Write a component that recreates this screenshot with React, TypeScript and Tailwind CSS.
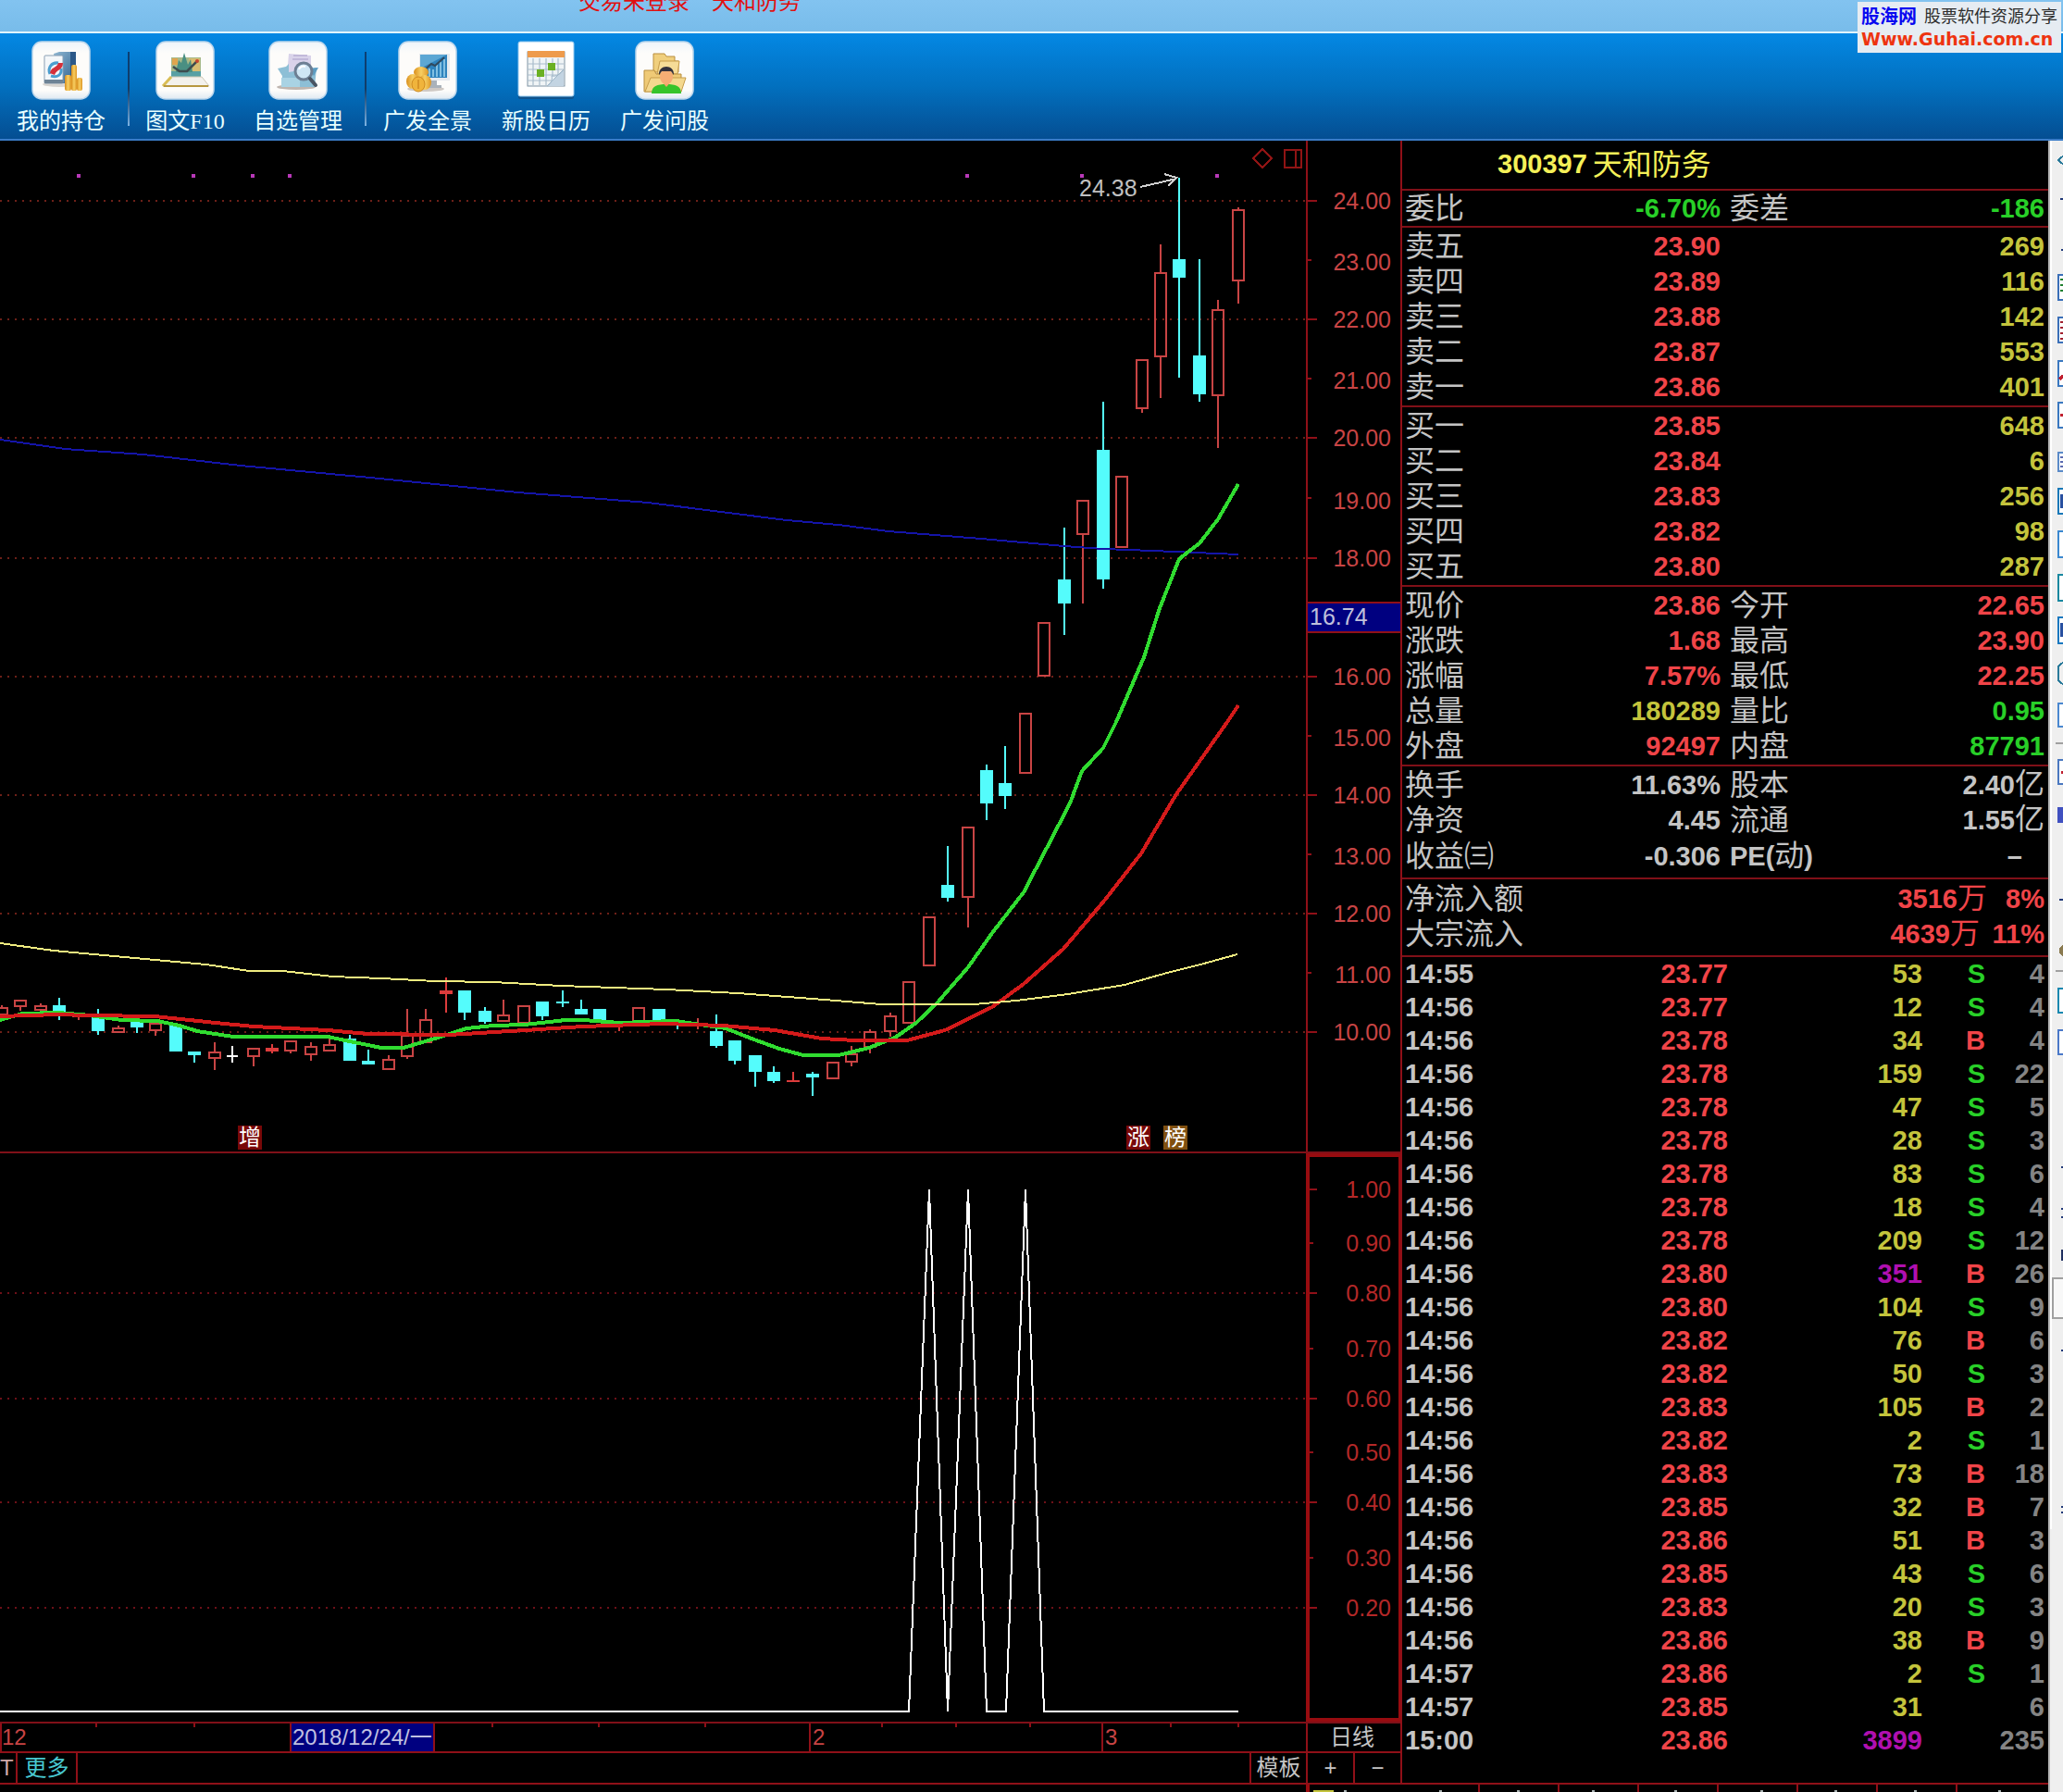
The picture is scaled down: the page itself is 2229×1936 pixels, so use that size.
import type { ReactNode } from "react";

const SANS = "font-['Liberation_Sans','Noto_Sans_CJK_SC',sans-serif]";
const SONG = "font-['Liberation_Serif','Noto_Sans_CJK_SC',serif]";

/* ---------- toolbar ---------- */

function Tile({ children }: { children: ReactNode }) {
  return (
    <svg viewBox="0 0 64 64" className="block h-16 w-16" aria-hidden="true">
      <defs>
        <linearGradient id="tile" x1="0" y1="0" x2="0" y2="1">
          <stop offset="0" stopColor="#eef4fa" />
          <stop offset="0.2" stopColor="#fdfcfa" />
          <stop offset="0.85" stopColor="#fdfcfa" />
          <stop offset="1" stopColor="#dfe9f2" />
        </linearGradient>
        <linearGradient id="gold" x1="0" y1="0" x2="1" y2="0">
          <stop offset="0" stopColor="#d98e1c" />
          <stop offset="0.5" stopColor="#f8cf62" />
          <stop offset="1" stopColor="#dd9524" />
        </linearGradient>
        <linearGradient id="steel" x1="0" y1="0" x2="1" y2="1">
          <stop offset="0" stopColor="#8fb7d2" />
          <stop offset="1" stopColor="#2c5f8e" />
        </linearGradient>
      </defs>
      {children}
    </svg>
  );
}

const RoundTile = () => (
  <rect x="1" y="1" width="62" height="62" rx="10" fill="url(#tile)" stroke="#bcd6ec" strokeWidth="1.5" />
);

function HoldingsIcon() {
  return (
    <Tile>
      <RoundTile />
      <ellipse cx="30" cy="47" rx="18" ry="3" fill="#d9d5d0" />
      <path d="M24 14 L30 12 H48 V42 L40 46 H30 Z" fill="url(#steel)" />
      <path d="M42 12 H48 V42 L42 45 Z" fill="#2c5888" />
      <rect x="14" y="16" width="20" height="30" rx="1" fill="#f4f7fa" stroke="#8aa0b4" />
      <path d="M14 42 H34 V46 H14 Z" fill="#6f8496" />
      <path d="M20 36 C17 29 22 23 29 24" fill="none" stroke="#4b9fd0" strokeWidth="3" />
      <path d="M32 30 C33 37 28 40 21 38" fill="none" stroke="#4b9fd0" strokeWidth="3" />
      <path d="M20 35 C21 28 27 30 29 24 L34 24 C34 32 27 31 25 37 Z" fill="#d6303a" />
      <rect x="36" y="37" width="7" height="17" rx="2" fill="url(#gold)" />
      <rect x="43" y="26" width="6" height="28" rx="2" fill="url(#gold)" />
      <rect x="49" y="40" width="6" height="14" rx="2" fill="url(#gold)" />
    </Tile>
  );
}

function LaptopChartIcon() {
  return (
    <Tile>
      <RoundTile />
      <path d="M17 18 H49 V40 H17 Z" fill="#a7b98a" />
      <path d="M18 19 H24 V26 H18 Z" fill="#e0a54e" />
      <path d="M36 19 H48 V38 H38 Z" fill="#d8bd72" />
      <path d="M17 33 H49 V39 H17 Z" fill="#58a0a4" />
      <path d="M22 34 L25 21 L28 24 L31 13 L35 26 L38 20 L40 34 Z" fill="#4a8f82" />
      <path d="M19 28 L26 33 L34 33 L45 22" fill="none" stroke="#3d4d50" strokeWidth="2.5" />
      <circle cx="45" cy="22" r="2" fill="#c7442f" />
      <path d="M16 39 H50 L58 49 H8 Z" fill="#f3f1ec" stroke="#cfc8b4" />
      <path d="M17 39 L8 49" stroke="#d9bd55" strokeWidth="3" />
      <path d="M9 49 H57" stroke="#b7973f" strokeWidth="2" />
    </Tile>
  );
}

function SearchFolderIcon() {
  return (
    <Tile>
      <RoundTile />
      <ellipse cx="30" cy="50" rx="21" ry="3" fill="#bfb6b0" />
      <path d="M22 14 L46 16 V38 H20 Z" fill="#d9d3ea" />
      <path d="M27 16 H42 M26 20 H43" stroke="#b9b0d4" strokeWidth="1.5" />
      <path d="M10 30 L19 28 L22 25 V34 L52 29 L50 50 H14 L15 38 Z" fill="#8dbfd6" />
      <path d="M14 40 H34 V50 H14 Z" fill="#a9d3e4" />
      <path d="M44 30 L54 29 L49 38 Z" fill="#5d9dc2" />
      <circle cx="38" cy="33" r="9" fill="#cfe6f4" stroke="#6d7f93" strokeWidth="3" />
      <path d="M33 31 C34 28 37 27 40 28" fill="none" stroke="#fff" strokeWidth="2" />
      <path d="M45 41 L51 48" stroke="#4a5563" strokeWidth="4" strokeLinecap="round" />
    </Tile>
  );
}

function MonitorCoinsIcon() {
  return (
    <Tile>
      <RoundTile />
      <ellipse cx="30" cy="52" rx="20" ry="3" fill="#cfc9c4" />
      <rect x="23" y="14" width="33" height="29" fill="#e6eaee" />
      <rect x="24" y="15" width="29" height="25" fill="#2e83bd" />
      <path d="M24 15 H53 L24 30 Z" fill="#5ca7d4" />
      <path d="M30 39 V32 M34 39 V30 M38 39 V31 M42 39 V26 M46 39 V23 M50 39 V20" stroke="#9fd5ee" strokeWidth="1.5" />
      <path d="M27 33 L36 25 L40 27 L50 18" fill="none" stroke="#30495e" strokeWidth="2" />
      <path d="M34 43 H42 V48 H47 V51 H32 Z" fill="#aab2ba" />
      <ellipse cx="25" cy="34" rx="8" ry="6" fill="url(#gold)" />
      <ellipse cx="16" cy="44" rx="7" ry="8" fill="url(#gold)" />
      <ellipse cx="29" cy="45" rx="7" ry="8" fill="url(#gold)" />
      <ellipse cx="22" cy="47" rx="7" ry="8" fill="#f0b43c" stroke="#d08b20" />
      <path d="M22 42 V52" stroke="#d08b20" strokeWidth="1.5" />
    </Tile>
  );
}

function CalendarIcon() {
  return (
    <Tile>
      <rect x="2" y="4" width="60" height="59" rx="2" fill="#164a7a" opacity="0.7" />
      <rect x="2" y="1" width="60" height="59" rx="2" fill="#fff" stroke="#8fc6ee" />
      <rect x="12" y="12" width="40" height="37" fill="#f0f4f6" stroke="#7f93a3" />
      <rect x="12" y="11" width="40" height="7" fill="#ee9b4c" />
      <path d="M12 25 H51 M12 31 H51 M12 37 H51 M12 43 H51 M18 19 V48 M25 19 V48 M32 19 V48 M39 19 V48 M45 19 V48" stroke="#a9bccb" strokeWidth="1.2" />
      <rect x="34" y="24" width="8" height="8" fill="#6ab023" />
      <rect x="22" y="31" width="8" height="8" fill="#6ab023" />
      <path d="M33 49 L51 31 V49 Z" fill="#c3d4e2" />
      <path d="M33 49 C38 46 39 42 38 38 C43 39 48 36 51 31 Z" fill="#e9f1f7" stroke="#9fb6c8" />
    </Tile>
  );
}

function AskIcon() {
  return (
    <Tile>
      <RoundTile />
      <path d="M20 14 H32 L34 17 H43 V22 H47 V34 H20 Z" fill="#f0cf7d" stroke="#b98f3e" />
      <path d="M24 36 L27 22 H48 L46 36 Z" fill="#f6dc97" stroke="#c79d4b" />
      <path d="M10 32 H21 L23 36 H50 V55 H10 Z" fill="#efca76" stroke="#b98f3e" />
      <path d="M11 55 L17 40 H55 L50 55 Z" fill="#f4d88e" stroke="#c79d4b" />
      <path d="M18 57 C18 49 24 47 34 47 C44 47 50 49 50 57 Z" fill="#36c42a" />
      <path d="M29 44 H39 L34 50 Z" fill="#f2a56a" />
      <ellipse cx="34" cy="39" rx="7" ry="8" fill="#f5ad74" />
      <path d="M26 37 C25 25 43 25 42 37 L39 33 H29 Z" fill="#33313b" />
    </Tile>
  );
}

function ToolButton({ label, icon }: { label: string; icon: ReactNode }) {
  return (
    <button className={`flex w-24 flex-col items-center gap-2 whitespace-nowrap text-[24px] leading-[30px] text-[#e8ffff] ${SONG}`}>
      {icon}
      {label}
    </button>
  );
}

const Separator = () => <div className="mt-3 h-20 w-0.5 bg-linear-to-b from-[#0b3f74] via-[#123c66] to-[#7fb4e4]" />;

function Header() {
  return (
    <header className="relative">
      <div className="h-[34px] bg-linear-to-b from-[#82c3f0] to-[#78bcea]">
        <div className={`flex h-4 items-end gap-6 overflow-hidden pl-[625px] text-[24px] leading-7 text-[#e01010] ${SANS}`}>
          <span>交易未登录</span>
          <span>天和防务</span>
        </div>
      </div>
      <nav className="flex h-[118px] items-start border-t-2 border-b-2 border-t-[#dff4fc] border-b-[#3a7cc8] bg-linear-to-b from-[#0488e4] via-[#0270bf] to-[#044e92] pt-2 pl-[18px]">
        <ToolButton label="我的持仓" icon={<HoldingsIcon />} />
        <div className="w-6" />
        <Separator />
        <div className="flex gap-[26px] pl-3">
          <ToolButton label="图文F10" icon={<LaptopChartIcon />} />
          <ToolButton label="自选管理" icon={<SearchFolderIcon />} />
        </div>
        <div className="w-6" />
        <Separator />
        <div className="flex gap-8 pl-[18px]">
          <ToolButton label="广发全景" icon={<MonitorCoinsIcon />} />
          <ToolButton label="新股日历" icon={<CalendarIcon />} />
          <ToolButton label="广发问股" icon={<AskIcon />} />
        </div>
      </nav>
      <a href="#guhai" className={`absolute top-0.5 right-0.5 block h-[55px] w-[220px] bg-[#e6ecf2] px-1 pt-1 whitespace-nowrap ${SANS}`}>
        <span className="flex h-6 items-center justify-between">
          <b className="text-[20px] leading-6 text-[#0808f0]">股海网</b>
          <span className="text-[18px] leading-6 text-[#2c2c2c]">股票软件资源分享</span>
        </span>
        <b className="block font-['DejaVu_Sans',sans-serif] text-[19px] leading-6 text-[#ee3410]">Www.Guhai.com.cn</b>
      </a>
    </header>
  );
}

/* ---------- candle chart ---------- */

type Kind = "up" | "down" | "solid" | "cross";
type Candle = [x: number, high: number, low: number, top: number, bottom: number, kind: Kind];

const candles: Candle[] = [
  [2, 1086, 1097, 1088, 1097, "up"],
  [22, 1080, 1092, 1080, 1088, "up"],
  [44, 1084, 1092, 1086, 1092, "up"],
  [64, 1078, 1102, 1086, 1094, "down"],
  [85, 1096, 1102, 1096, 1099, "up"],
  [106, 1090, 1118, 1097, 1114, "down"],
  [128, 1108, 1116, 1110, 1116, "up"],
  [148, 1103, 1116, 1103, 1110, "down"],
  [168, 1105, 1119, 1105, 1114, "up"],
  [190, 1108, 1136, 1108, 1136, "down"],
  [210, 1136, 1148, 1136, 1140, "down"],
  [232, 1126, 1156, 1136, 1144, "up"],
  [251, 1130, 1148, 1140, 1142, "cross"],
  [274, 1132, 1152, 1132, 1142, "up"],
  [294, 1128, 1138, 1132, 1136, "solid"],
  [314, 1124, 1138, 1124, 1136, "up"],
  [336, 1126, 1146, 1130, 1140, "up"],
  [356, 1120, 1136, 1128, 1136, "up"],
  [378, 1118, 1146, 1122, 1146, "down"],
  [398, 1134, 1150, 1146, 1150, "down"],
  [420, 1140, 1156, 1144, 1156, "up"],
  [440, 1090, 1144, 1118, 1142, "up"],
  [460, 1090, 1127, 1101, 1127, "up"],
  [482, 1056, 1094, 1070, 1074, "solid"],
  [502, 1070, 1102, 1070, 1094, "down"],
  [524, 1088, 1106, 1092, 1104, "down"],
  [544, 1080, 1104, 1096, 1104, "up"],
  [566, 1086, 1106, 1086, 1106, "up"],
  [586, 1082, 1102, 1082, 1098, "down"],
  [608, 1070, 1088, 1082, 1084, "down"],
  [628, 1080, 1096, 1090, 1096, "down"],
  [648, 1090, 1104, 1090, 1104, "down"],
  [669, 1104, 1114, 1104, 1106, "solid"],
  [690, 1088, 1104, 1088, 1104, "up"],
  [712, 1090, 1103, 1090, 1103, "down"],
  [732, 1104, 1112, 1104, 1106, "down"],
  [754, 1100, 1112, 1106, 1109, "up"],
  [774, 1096, 1132, 1114, 1130, "down"],
  [794, 1124, 1150, 1124, 1146, "down"],
  [816, 1140, 1174, 1140, 1158, "down"],
  [836, 1152, 1170, 1158, 1168, "down"],
  [857, 1158, 1169, 1167, 1169, "solid"],
  [878, 1158, 1184, 1160, 1164, "down"],
  [900, 1147, 1166, 1147, 1166, "up"],
  [920, 1130, 1152, 1138, 1148, "up"],
  [940, 1112, 1138, 1114, 1132, "up"],
  [962, 1094, 1120, 1097, 1115, "up"],
  [982, 1060, 1106, 1060, 1106, "up"],
  [1004, 990, 1044, 990, 1044, "up"],
  [1024, 914, 974, 956, 970, "down"],
  [1046, 893, 1002, 893, 970, "up"],
  [1066, 826, 886, 832, 868, "down"],
  [1086, 806, 874, 846, 860, "down"],
  [1108, 770, 836, 770, 836, "up"],
  [1128, 672, 731, 672, 731, "up"],
  [1150, 570, 686, 626, 652, "down"],
  [1170, 540, 652, 540, 578, "up"],
  [1192, 434, 636, 486, 626, "down"],
  [1212, 514, 592, 514, 592, "up"],
  [1234, 388, 446, 388, 442, "up"],
  [1254, 264, 430, 294, 386, "up"],
  [1274, 192, 408, 280, 300, "down"],
  [1296, 280, 434, 384, 426, "down"],
  [1316, 324, 484, 334, 428, "up"],
  [1338, 224, 328, 226, 304, "up"],
];

const candleColor: Record<Kind, string> = { up: "#c84444", down: "#54fcfc", solid: "#dc3c3c", cross: "#ffffff" };

function CandleShape({ c }: { c: Candle }) {
  const [x, high, low, top, bottom, kind] = c;
  const color = candleColor[kind];
  if (kind === "up") {
    return (
      <g fill={color}>
        {top > high && <rect x={x - 1} y={high} width="2" height={top - high} />}
        {low > bottom && <rect x={x - 1} y={bottom} width="2" height={low - bottom} />}
        <rect x={x - 6} y={top + 1} width="12" height={bottom - top - 2} fill="none" stroke={color} strokeWidth="2" />
      </g>
    );
  }
  const half = kind === "cross" ? 6 : 7;
  return (
    <g fill={color}>
      <rect x={x - 1} y={high} width="2" height={low - high} />
      <rect x={x - half} y={top} width={half * 2} height={bottom - top} />
    </g>
  );
}

const ma = {
  blue: "0,475 70,485 155,491 260,503 400,516 560,532 700,543 850,562 906,567 960,574 1060,582 1150,590 1192,593 1245,595 1338,599",
  yellow:
    "0,1019 58,1027 167,1037 223,1042 269,1049 305,1049 359,1055 412,1057 470,1060 533,1061 606,1065 720,1069 797,1073 878,1079 952,1085 1052,1085 1098,1081 1154,1074 1215,1064 1261,1051 1297,1042 1337,1031",
  green:
    "0,1102 24,1095 63,1094 97,1097 131,1102 170,1103 194,1108 213,1114 252,1120 354,1120 373,1124 412,1132 436,1132 473,1121 504,1111 533,1108 567,1107 611,1102 630,1102 669,1105 730,1103 784,1111 812,1122 842,1133 868,1140 906,1140 939,1132 967,1121 990,1105 1013,1083 1046,1045 1072,1008 1106,964 1156,868 1169,833 1192,808 1206,780 1236,710 1253,657 1274,604 1284,596 1296,587 1316,561 1338,523",
  red: "0,1098 63,1096 97,1097 167,1098 233,1105 274,1109 354,1113 397,1117 485,1118 567,1113 630,1109 717,1106 781,1108 837,1113 888,1122 924,1124 980,1124 1021,1113 1072,1088 1106,1063 1149,1025 1194,972 1233,922 1271,858 1326,780 1338,762",
};

const priceGrid = [217, 345, 473, 603, 731, 859, 987, 1115];
const dots = [85, 209, 273, 313, 1045, 1169, 1315];

function PriceChart() {
  return (
    <div className="relative min-w-0 flex-1">
      <svg className="block h-[1092px] w-full" shapeRendering="crispEdges" role="img" aria-label="日线">
        <g transform="translate(0 -152)">
          {priceGrid.map((y) => (
            <line key={y} x1="0" x2="100%" y1={y} y2={y} stroke="#6e2018" strokeWidth="2" strokeDasharray="2 6" />
          ))}
          {dots.map((x) => (
            <rect key={x} x={x - 2} y="188" width="4" height="4" fill="#b838b8" />
          ))}
          {candles.map((c) => (
            <CandleShape key={c[0]} c={c} />
          ))}
          <polyline points={ma.blue} fill="none" stroke="#1414a8" strokeWidth="2" />
          <polyline points={ma.green} fill="none" stroke="#30dc30" strokeWidth="4" />
          <polyline points={ma.red} fill="none" stroke="#d41a1a" strokeWidth="4" />
          <polyline points={ma.yellow} fill="none" stroke="#f0ec80" strokeWidth="2" />
          <path d="M1232 202 L1254 197 L1271 193 M1258 188 L1271 192 L1262 201" fill="none" stroke="#d0d0d0" strokeWidth="2" />
          <text x="1166" y="212" fontSize="25" fill="#c0c0c0" fontFamily="Liberation Sans">
            24.38
          </text>
          <path d="M1364 161 L1374 171 L1364 181 L1354 171 Z M1388 162 H1406 V181 H1388 Z M1400 162 V181" fill="none" stroke="#901414" strokeWidth="2" />
        </g>
      </svg>
      <span className={`absolute bottom-0.5 left-[257px] h-[26px] w-[26px] bg-[#780808] text-center text-[24px] leading-[26px] text-white ${SANS}`}>增</span>
      <span className={`absolute bottom-0.5 left-[1217px] h-[26px] w-[26px] bg-[#780808] text-center text-[24px] leading-[26px] text-white ${SANS}`}>涨</span>
      <span className={`absolute bottom-0.5 left-[1257px] h-[26px] w-[26px] bg-[#805010] text-center text-[24px] leading-[26px] text-white ${SANS}`}>榜</span>
    </div>
  );
}

const priceTicks: [string, number, number][] = [
  ["24.00", 217, 217],
  ["23.00", 281, 283],
  ["22.00", 345, 345],
  ["21.00", 409, 411],
  ["20.00", 473, 473],
  ["19.00", 538, 541],
  ["18.00", 603, 603],
  ["16.00", 731, 731],
  ["15.00", 795, 797],
  ["14.00", 859, 859],
  ["13.00", 923, 925],
  ["12.00", 987, 987],
  ["11.00", 1051, 1053],
  ["10.00", 1115, 1115],
];

function PriceAxis() {
  return (
    <div className="relative w-[102px] shrink-0 border-l-2 border-[#901018]">
      <svg className="block h-[1092px] w-full" shapeRendering="crispEdges">
        <g transform="translate(0 -152)">
          {priceTicks.map(([label, tick, mid]) => (
            <g key={label}>
              <rect x="0" y={tick - 1} width={tick === mid ? 10 : 4} height="2" fill="#901018" />
              <text x="90" y={mid + 9} textAnchor="end" fontSize="25" fill="#c84444" fontFamily="Liberation Sans">
                {label}
              </text>
            </g>
          ))}
        </g>
      </svg>
      <div className={`absolute top-[498px] right-0 left-0 h-[34px] border-y-2 border-[#901018] bg-[#000080] pl-0.5 text-[25px] leading-7 text-[#c0c0dc] ${SANS}`}>
        16.74
      </div>
    </div>
  );
}

/* ---------- indicator chart ---------- */

const levels: [string, number][] = [
  ["1.00", 1285],
  ["0.90", 1343],
  ["0.80", 1397],
  ["0.70", 1457],
  ["0.60", 1511],
  ["0.50", 1569],
  ["0.40", 1623],
  ["0.30", 1683],
  ["0.20", 1737],
];

function SignalChart() {
  return (
    <svg className="block h-[614px] min-w-0 flex-1" shapeRendering="crispEdges" role="img" aria-label="指标">
      <g transform="translate(0 -1246)">
        {[1397, 1511, 1623, 1737].map((y) => (
          <line key={y} x1="0" x2="100%" y1={y} y2={y} stroke="#6e1018" strokeWidth="2" strokeDasharray="2 6" />
        ))}
        <polyline
          points="0,1849 982,1849 1004,1285 1024,1849 1046,1285 1066,1849 1087,1849 1108,1285 1128,1849 1338,1849"
          fill="none"
          stroke="#ffffff"
          strokeWidth="2"
          strokeLinejoin="bevel"
        />
      </g>
    </svg>
  );
}

function SignalAxis() {
  return (
    <div className="w-[102px] shrink-0 border-4 border-r-2 border-[#980c10]">
      <svg className="block h-[606px] w-full" shapeRendering="crispEdges">
        <g transform="translate(0 -1250)">
          {levels.map(([label, y], i) => (
            <g key={label}>
              <rect x="0" y={y - 1} width={i % 2 ? 4 : 8} height="2" fill="#901018" />
              <text x="88" y={y + 9} textAnchor="end" fontSize="25" fill="#b42828" fontFamily="Liberation Sans">
                {label}
              </text>
            </g>
          ))}
        </g>
      </svg>
    </div>
  );
}

/* ---------- date row and tab row ---------- */

function DateRow() {
  return (
    <div className={`flex h-8 border-t-2 border-[#801018] text-[24px] leading-[30px] text-[#c84444] ${SANS}`}>
      <div className="relative flex min-w-0 flex-1">
        <svg className="absolute inset-0 h-full w-full" shapeRendering="crispEdges" aria-hidden="true">
          {[104, 210, 532, 647, 762, 953, 1033, 1113, 1265, 1338].map((x) => (
            <rect key={x} x={x - 1} y="0" width="2" height="4" fill="#901018" />
          ))}
        </svg>
        <span className="w-[313px] border-l-2 border-[#901018]">12</span>
        <span className="w-[157px] border-x-2 border-[#901018] bg-[#000080] pl-px whitespace-nowrap text-[#c0c0e0]">
          2018/12/24/一
        </span>
        <span className="w-[404px]" />
        <span className="w-[316px] border-l-2 border-[#901018] pl-0.5">2</span>
        <span className="border-l-2 border-[#901018] pl-0.5">3</span>
      </div>
      <button className="w-[102px] shrink-0 border-l-2 border-[#901018] pr-1 text-center text-[#c4c4c4]">日线</button>
    </div>
  );
}

function TabRow() {
  return (
    <div className={`flex h-[34px] border-t-2 border-[#901018] text-[24px] leading-8 text-[#c4c4c4] ${SANS}`}>
      <button className="w-[17px] text-left text-[#d0a8a8]">T</button>
      <button className="w-[67px] border-x-2 border-[#901018] text-[#48c8d0]">更多</button>
      <div className="flex-1" />
      <button className="w-[61px] border-l-2 border-[#901018]">模板</button>
      <button className="w-[51px] border-l-2 border-[#901018]">+</button>
      <button className="w-[51px] border-l-2 border-[#901018]">−</button>
    </div>
  );
}

/* ---------- quote panel ---------- */

const R = "text-[#f04448]";
const G = "text-[#28d028]";
const Y = "text-[#c4c43c]";
const W = "text-[#c4c4c4]";

type QuoteRow = [label: string, value: string, valueColor: string, label2: string, value2: string, value2Color: string];

const sells: QuoteRow[] = [
  ["卖五", "23.90", R, "", "269", Y],
  ["卖四", "23.89", R, "", "116", Y],
  ["卖三", "23.88", R, "", "142", Y],
  ["卖二", "23.87", R, "", "553", Y],
  ["卖一", "23.86", R, "", "401", Y],
];
const buys: QuoteRow[] = [
  ["买一", "23.85", R, "", "648", Y],
  ["买二", "23.84", R, "", "6", Y],
  ["买三", "23.83", R, "", "256", Y],
  ["买四", "23.82", R, "", "98", Y],
  ["买五", "23.80", R, "", "287", Y],
];
const prices: QuoteRow[] = [
  ["现价", "23.86", R, "今开", "22.65", R],
  ["涨跌", "1.68", R, "最高", "23.90", R],
  ["涨幅", "7.57%", R, "最低", "22.25", R],
  ["总量", "180289", Y, "量比", "0.95", G],
  ["外盘", "92497", R, "内盘", "87791", G],
];
const basics: QuoteRow[] = [
  ["换手", "11.63%", W, "股本", "2.40亿", W],
  ["净资", "4.45", W, "流通", "1.55亿", W],
  ["收益㈢", "-0.306", W, "PE(动)", "–", W],
];

/* Chinese units keep the plain weight of the labels while digits are bold. */
function Value({ text }: { text: string }) {
  const unit = /[亿万]$/.test(text) ? text.slice(-1) : "";
  return (
    <>
      {unit ? text.slice(0, -1) : text}
      {unit && <span className="text-[32px] leading-none font-normal">{unit}</span>}
    </>
  );
}

function QuoteTable({ rows, pad }: { rows: QuoteRow[]; pad: string }) {
  return (
    <div className={`border-t-2 border-[#801018] ${pad}`}>
      <table className="w-full table-fixed border-collapse">
        <colgroup>
          <col className="w-[112px]" />
          <col className="w-[234px]" />
          <col className="w-[120px]" />
          <col />
        </colgroup>
        <tbody>
          {rows.map(([a, av, ac, b, bv, bc]) => (
            <tr key={a} className="h-[38px] leading-[38px] whitespace-nowrap">
              <th scope="row" className="p-0 pl-[3px] text-left text-[32px] font-normal">
                {a}
              </th>
              <td className={`p-0 pr-0.5 text-right text-[29px] font-bold ${ac}`}>{av}</td>
              <td className="p-0 pl-2 text-left text-[32px] font-normal">
                {b.startsWith("PE") ? (
                  <>
                    <span className="text-[29px] font-bold">PE(</span>动<span className="text-[29px] font-bold">)</span>
                  </>
                ) : (
                  b
                )}
              </td>
              <td className={`p-0 text-right text-[29px] font-bold ${bv === "–" ? "pr-7" : "pr-1"} ${bc}`}>
                <Value text={bv} />
              </td>
            </tr>
          ))}
        </tbody>
      </table>
    </div>
  );
}

const flows: [string, string, string, string][] = [
  ["净流入额", "3516万", "8%", "w-[62px]"],
  ["大宗流入", "4639万", "11%", "w-[70px]"],
];

function FlowRows() {
  return (
    <div className="border-t-2 border-[#801018] pt-0.5 pb-1">
      {flows.map(([label, value, pct, width]) => (
        <div key={label} className="flex h-[38px] pr-1 pl-[3px] leading-[38px] whitespace-nowrap">
          <span className="flex-1 text-[32px]">{label}</span>
          <span className={`text-[29px] font-bold ${R}`}>
            <Value text={value} />
          </span>
          <span className={`text-right text-[29px] font-bold ${width} ${R}`}>{pct}</span>
        </div>
      ))}
    </div>
  );
}

type Tick = [time: string, price: string, volume: string, side: string, count: string];

const ticks: Tick[] = [
  ["14:55", "23.77", "53", "S", "4"],
  ["14:56", "23.77", "12", "S", "4"],
  ["14:56", "23.78", "34", "B", "4"],
  ["14:56", "23.78", "159", "S", "22"],
  ["14:56", "23.78", "47", "S", "5"],
  ["14:56", "23.78", "28", "S", "3"],
  ["14:56", "23.78", "83", "S", "6"],
  ["14:56", "23.78", "18", "S", "4"],
  ["14:56", "23.78", "209", "S", "12"],
  ["14:56", "23.80", "351", "B", "26"],
  ["14:56", "23.80", "104", "S", "9"],
  ["14:56", "23.82", "76", "B", "6"],
  ["14:56", "23.82", "50", "S", "3"],
  ["14:56", "23.83", "105", "B", "2"],
  ["14:56", "23.82", "2", "S", "1"],
  ["14:56", "23.83", "73", "B", "18"],
  ["14:56", "23.85", "32", "B", "7"],
  ["14:56", "23.86", "51", "B", "3"],
  ["14:56", "23.85", "43", "S", "6"],
  ["14:56", "23.83", "20", "S", "3"],
  ["14:56", "23.86", "38", "B", "9"],
  ["14:57", "23.86", "2", "S", "1"],
  ["14:57", "23.85", "31", "", "6"],
  ["15:00", "23.86", "3899", "", "235"],
];

function TickTable() {
  return (
    <div className="border-t-2 border-[#801018]">
      <table className="w-full table-fixed border-collapse text-[29px] font-bold">
        <colgroup>
          <col className="w-[120px]" />
          <col className="w-[232px]" />
          <col className="w-[210px]" />
          <col className="w-[68px]" />
          <col />
        </colgroup>
        <tbody>
          {ticks.map(([time, price, volume, side, count], i) => (
            <tr key={i} className="h-9 leading-9">
              <td className="p-0 pl-[3px]">{time}</td>
              <td className={`p-0 text-right ${R}`}>{price}</td>
              <td className={`p-0 text-right ${Number(volume) > 300 ? "text-[#b010b0]" : Y}`}>{volume}</td>
              <td className={`p-0 text-right ${side === "S" ? G : R}`}>{side}</td>
              <td className="p-0 pr-1 text-right text-[#848484]">{count}</td>
            </tr>
          ))}
        </tbody>
      </table>
    </div>
  );
}

function QuotePanel() {
  return (
    <section className={`w-[700px] shrink-0 border-l-2 border-[#901018] text-[#c4c4c4] ${SANS}`}>
      <h1 className="flex h-[52px] items-center gap-1.5 pl-[103px] text-[#f4f058]">
        <span className="text-[29px] font-bold">300397</span>
        <span className="text-[32px]">天和防务</span>
      </h1>
      <QuoteTable rows={[["委比", "-6.70%", G, "委差", "-186", G]]} pad="" />
      <QuoteTable rows={sells} pad="py-px" />
      <QuoteTable rows={buys} pad="py-px" />
      <QuoteTable rows={prices} pad="py-px" />
      <QuoteTable rows={basics} pad="pt-px pb-1" />
      <FlowRows />
      <TickTable />
    </section>
  );
}

/* ---------- side rail: tools cut by the window edge ---------- */

const railBoxes: [number, number, string][] = [
  [296, 29, "#3a6fb8"],
  [342, 29, "#3a6fb8"],
  [389, 29, "#3a78c0"],
  [434, 29, "#3a78c0"],
  [488, 22, "#5a8ac8"],
  [527, 29, "#1878b8"],
  [573, 30, "#3a88d0"],
  [620, 30, "#1888a0"],
  [666, 30, "#1878c0"],
  [759, 27, "#4a88d0"],
  [820, 28, "#4a78c0"],
  [1067, 28, "#1888b0"],
  [1112, 28, "#4a78c8"],
];

function SideRail() {
  return (
    <aside className="w-4 shrink-0 overflow-hidden border-l-2 border-[#b8b8b8] bg-[#efefef]">
      <svg className="block h-[1500px] w-[14px]" shapeRendering="crispEdges" aria-hidden="true">
        <g transform="translate(-2215 -152)">
          <rect x="2215" y="152" width="2" height="1784" fill="#ffffff" />
          {railBoxes.map(([y, h, color]) => (
            <rect key={y} x="2224" y={y + 1} width="20" height={h - 2} fill="#fff" stroke={color} strokeWidth="2" />
          ))}
          <path d="M2232 166 L2224 173 L2232 180 M2232 713 L2224 720 V735 L2232 742" fill="none" stroke="#2a7a9a" strokeWidth="2" />
          <path d="M2226 302 H2229 M2226 308 H2229 M2226 314 H2229" stroke="#208030" strokeWidth="2" />
          <path d="M2226 348 H2229 M2226 354 H2229 M2226 360 H2229 M2226 366 H2229" stroke="#a02030" strokeWidth="2" />
          <path d="M2225 410 L2229 406 M2226 448 H2229 M2227 834 H2229" stroke="#c02030" strokeWidth="3" />
          <path d="M2226 494 H2229 M2226 499 H2229 M2226 504 H2229" stroke="#5a6ab0" strokeWidth="2" />
          <rect x="2226" y="534" width="3" height="15" fill="#2850a0" />
          <rect x="2226" y="673" width="3" height="15" fill="#2850a0" />
          <path d="M2226 215 H2229 M2227 270 H2229 M2225 972 H2229 M2227 1261 H2229 M2227 1306 H2229 M2227 1315 H2229 M2227 1459 H2229 M2227 1628 H2229 M2227 1634 H2229" stroke="#203878" strokeWidth="2" />
          <rect x="2223" y="872" width="6" height="17" fill="#4050c0" />
          <rect x="2227" y="1350" width="2" height="12" fill="#203060" />
          <path d="M2229 1021 C2223 1022 2223 1032 2229 1033 Z" fill="#8a7a50" />
          <path d="M2221 803 H2229 M2221 1049 H2229" stroke="#a0a0a0" strokeWidth="2" />
          <rect x="2218" y="1381" width="20" height="43" fill="#f8f8f8" stroke="#a0a0a0" strokeWidth="2" />
        </g>
      </svg>
    </aside>
  );
}

const bottomTabs = [1598, 1684, 1770, 1856, 1942, 2028, 2114];
const bottomMarks = [1452, 1555, 1639, 1720, 1809, 1902, 1982, 2068, 2159];

function BottomStrip() {
  return (
    <svg className="block h-2 w-full" shapeRendering="crispEdges" aria-hidden="true">
      <rect x="1411" y="0" width="4" height="8" fill="#980c10" />
      <rect x="1419" y="6" width="22" height="2" fill="#c4c43c" />
      {bottomTabs.map((x) => (
        <rect key={x} x={x - 1} y="0" width="2" height="8" fill="#901018" />
      ))}
      {bottomMarks.map((x) => (
        <rect key={x} x={x} y="6" width="3" height="2" fill="#a8b0b0" />
      ))}
    </svg>
  );
}

export default function App() {
  return (
    <div className="flex min-h-screen flex-col overflow-hidden bg-black">
      <Header />
      <main className="flex flex-1">
        <div className="min-w-0 flex-1">
          <div className="flex border-b-2 border-[#901018]">
            <div className="min-w-0 flex-1">
              <div className="flex">
                <PriceChart />
                <PriceAxis />
              </div>
              <div className="flex border-t-2 border-[#801018]">
                <SignalChart />
                <SignalAxis />
              </div>
              <DateRow />
              <TabRow />
            </div>
            <QuotePanel />
          </div>
          <BottomStrip />
        </div>
        <SideRail />
      </main>
    </div>
  );
}
